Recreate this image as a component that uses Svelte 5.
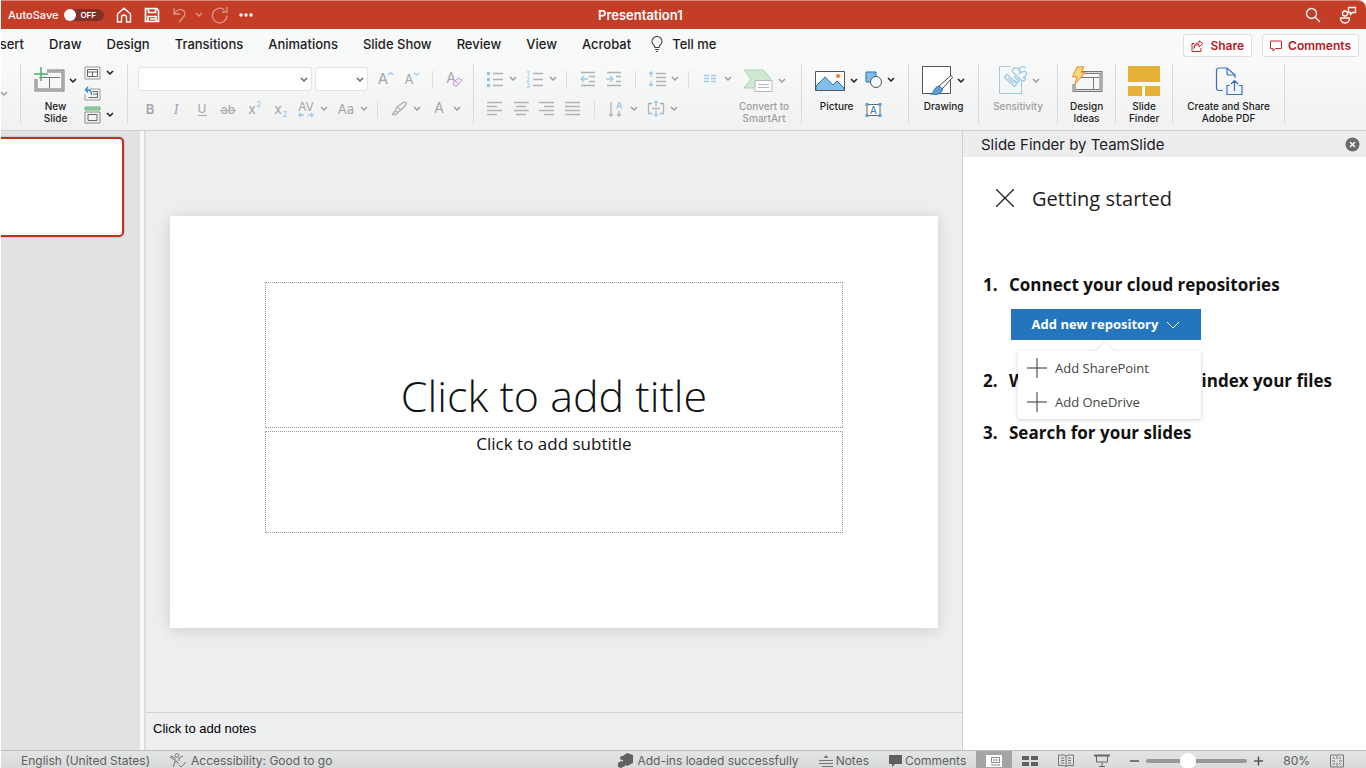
<script lang="ts">
	interface Tool {
		icon?: string;
		label?: string;
		menu?: boolean;
		sep?: boolean;
	}

	const tabs = ['Draw', 'Design', 'Transitions', 'Animations', 'Slide Show', 'Review', 'View', 'Acrobat'];

	const fontSizeTools: Tool[] = [
		{ icon: 'grow', label: 'Increase font size' },
		{ icon: 'shrink', label: 'Decrease font size' },
		{ sep: true },
		{ icon: 'clear', label: 'Clear formatting' }
	];

	const fontStyleTools: Tool[] = [
		{ icon: 'bold', label: 'Bold' },
		{ icon: 'italic', label: 'Italic' },
		{ icon: 'underline', label: 'Underline' },
		{ icon: 'strike', label: 'Strikethrough' },
		{ icon: 'superscript', label: 'Superscript' },
		{ icon: 'subscript', label: 'Subscript' },
		{ icon: 'spacing', label: 'Character spacing', menu: true },
		{ icon: 'textcase', label: 'Change case', menu: true },
		{ sep: true },
		{ icon: 'pen', label: 'Highlight color', menu: true },
		{ icon: 'fontcolor', label: 'Font color', menu: true }
	];

	const listTools: Tool[] = [
		{ icon: 'bullets', label: 'Bullets', menu: true },
		{ icon: 'numbers', label: 'Numbering', menu: true },
		{ sep: true },
		{ icon: 'outdent', label: 'Decrease indent' },
		{ icon: 'indent', label: 'Increase indent' },
		{ sep: true },
		{ icon: 'lines', label: 'Line spacing', menu: true },
		{ sep: true },
		{ icon: 'columns', label: 'Columns', menu: true }
	];

	const alignTools: Tool[] = [
		{ icon: 'left', label: 'Align left' },
		{ icon: 'center', label: 'Center' },
		{ icon: 'right', label: 'Align right' },
		{ icon: 'justify', label: 'Justify' },
		{ sep: true },
		{ icon: 'direction', label: 'Text direction', menu: true },
		{ icon: 'aligntext', label: 'Align text', menu: true }
	];

	const grey = 'stroke="#b1b3b5" stroke-width="1.3"';
	const blue = 'stroke="#9ccbeb" stroke-width="1.3"';
	const text = 'font-family="Inter, sans-serif" fill="#a3a5a7" text-anchor="middle"';

	// 18 x 18 toolbar glyphs
	const icons: Record<string, string> = {
		grow: `<text x="7" y="14" font-size="15" ${text}>A</text><path d="M12 5l2.5-2.500L17 5" ${blue}/>`,
		shrink: `<text x="7" y="14" font-size="13" ${text}>A</text><path d="M12 3l2.500 2L17 3" ${blue}/>`,
		clear: `<text x="6" y="13" font-size="14" ${text}>A</text><path d="M8 13l5-5 4 2-5 6-3-.5zM10 11l4 3" fill="#f6e9f7" stroke="#cc9bd4"/>`,
		bold: `<text x="9" y="14" font-size="13" font-weight="600" ${text}>B</text>`,
		italic: `<text x="9" y="14" font-size="14" font-style="italic" ${text} style="font-family:'Liberation Serif'">I</text>`,
		underline: `<text x="9" y="13" font-size="12" ${text}>U</text><path d="M5 15.500h9" ${grey}/>`,
		strike: `<text x="9" y="14" font-size="12" ${text}>ab</text><path d="M1 10.500h16" ${grey}/>`,
		superscript: `<text x="7" y="14" font-size="14" ${text}>x</text><text x="14" y="7" font-size="7" ${text} style="fill:#7dbbe6">2</text>`,
		subscript: `<text x="7" y="14" font-size="14" ${text}>x</text><text x="14" y="17" font-size="7" ${text} style="fill:#7dbbe6">2</text>`,
		spacing: `<text x="9" y="11" font-size="12" ${text}>AV</text><path d="M2 15h5M11 15h5M4 13l-2 2 2 2M14 13l2 2-2 2" ${blue}/>`,
		textcase: `<text x="9" y="14" font-size="13" ${text}>Aa</text>`,
		pen: `<path d="M5 11l2-4 7-5 2.500 1-2 3.500-6 5.500zM7 7l4 3M2.500 14.500L5 11l3 1-2 2.500z" ${grey}/>`,
		fontcolor: `<text x="9" y="13" font-size="14" ${text}>A</text>`,
		bullets: `<path d="M7 3.500h10M7 9.500h10M7 15.500h10" ${grey}/><path d="M1 3.500h3M1 9.500h3M1 15.500h3" stroke="#8fc4e9" stroke-width="3"/>`,
		numbers: `<path d="M7 3.500h10M7 9.500h10M7 15.500h10" ${grey}/><g font-size="6"><text x="2" y="6" ${text} style="fill:#7dbbe6">1</text><text x="2" y="12" ${text} style="fill:#7dbbe6">2</text><text x="2" y="18" ${text} style="fill:#7dbbe6">3</text></g>`,
		outdent: `<path d="M2 2.500h14M10 6.500h6M10 11.500h6M2 15.500h14" ${grey}/><path d="M9 9H2M5 6L2 9l3 3" ${blue}/>`,
		indent: `<path d="M2 2.500h14M11 6.500h5M11 11.500h5M2 15.500h14" ${grey}/><path d="M1 9h7M5 6l3 3-3 3" ${blue}/>`,
		lines: `<path d="M8 3.500h10M8 7.500h10M8 11.500h10M8 15.500h10" ${grey}/><path d="M3 2v5M3 11v5M1 4l2-2 2 2M1 14l2 2 2-2" ${blue}/>`,
		columns: `<path d="M3 5.500h5M3 8.500h5M3 11.500h5M10 5.500h5M10 8.500h5M10 11.500h5" ${blue}/>`,
		left: `<path d="M1 2.500h15M1 6.500h10M1 10.500h15M1 14.500h10" ${grey}/>`,
		center: `<path d="M2 2.500h15M4 6.500h10M2 10.500h15M4 14.500h10" ${grey}/>`,
		right: `<path d="M1 2.500h15M6 6.500h10M1 10.500h15M6 14.500h10" ${grey}/>`,
		justify: `<path d="M1 2.500h15M1 6.500h15M1 10.500h15M1 14.500h15" ${grey}/>`,
		direction: `<path d="M4 2v14M2 14l2 2 2-2M12 11v5M10 14l2 2 2-2" ${grey}/><text x="12" y="9" font-size="9" ${text} style="fill:#7dbbe6">A</text>`,
		aligntext: `<path d="M5 3.500H1.500v10H5M13 3.500h3.500v10H13M5 8.500h8" ${grey}/><path d="M9 1v6M9 10v6M7 3l2-2 2 2M7 14l2 2 2-2" ${blue}/>`
	};

	const menuItems = ['Add SharePoint', 'Add OneDrive'];

	let autoSave = $state(false);
	let zoom = $state(40);
	let menuOpen = $state(true);
</script>

{#snippet chevron()}
	<svg class="chevron" width="10" height="8" viewBox="0 0 10 8" fill="none" stroke="currentColor" stroke-width="1.5">
		<path d="M2 2l3 3 3-3" />
	</svg>
{/snippet}

{#snippet tools(items: Tool[])}
	{#each items as tool}
		{#if tool.sep}
			<span class="sep"></span>
		{:else}
			<button class="tool" class:plain={!tool.menu} aria-label={tool.label}>
				<svg width="18" height="18" viewBox="0 0 18 18" fill="none">{@html icons[tool.icon ?? '']}</svg>
				{#if tool.menu}{@render chevron()}{/if}
			</button>
		{/if}
	{/each}
{/snippet}

<div class="app">
	<!-- Title bar -->
	<header class="titlebar">
		<div class="title-side">
			<label class="autosave">
				<span>AutoSave</span>
				<input type="checkbox" bind:checked={autoSave} />
				<span class="switch"><i></i>{autoSave ? 'ON' : 'OFF'}</span>
			</label>
			<button aria-label="Home">
				<svg width="16" height="16" viewBox="0 0 16 16" fill="none" stroke="#fff" stroke-width="1.4">
					<path d="M1.500 7L8 1.200 14.500 7v8h-4v-4.500a2.500 2.500 0 00-5 0V15h-4z" />
				</svg>
			</button>
			<button aria-label="Save">
				<svg width="16" height="16" viewBox="0 0 16 16" fill="none" stroke="#fff" stroke-width="1.7">
					<path d="M1.500 1.500h11l2 2v11h-13zM4.500 1.500v4h7v-4M4 14.500v-5h8v5M6 12h5" />
				</svg>
			</button>
			<button class="faded" aria-label="Undo">
				<svg width="16" height="18" viewBox="0 0 16 18" fill="none" stroke="#fff" stroke-width="1.3">
					<path d="M2 2v6h6M2 8c3-5 7-6 10-3 2 3 1 5-5 11" />
				</svg>
				{@render chevron()}
			</button>
			<button class="faded redo" aria-label="Redo">
				<svg width="18" height="18" viewBox="0 0 18 18" fill="none" stroke="#fff" stroke-width="1.3">
					<path d="M16 9.500A7.300 7.300 0 1113.500 4M16 1v5h-5" />
				</svg>
			</button>
			<button aria-label="More">
				<svg width="16" height="6" viewBox="0 0 16 6" fill="#fff">
					<circle cx="3" cy="3" r="1.700" /><circle cx="8" cy="3" r="1.700" /><circle cx="13" cy="3" r="1.700" />
				</svg>
			</button>
		</div>
		<h1>Presentation1</h1>
		<div class="title-side end">
			<button aria-label="Search">
				<svg width="16" height="16" viewBox="0 0 16 16" fill="none" stroke="#fff" stroke-width="1.3">
					<circle cx="6.500" cy="6.500" r="5" /><path d="M10 10l5 5" />
				</svg>
			</button>
			<button aria-label="Account">
				<svg width="18" height="18" viewBox="0 0 18 18" fill="none" stroke="#fff" stroke-width="1.3">
					<circle cx="6" cy="7.500" r="2.500" />
					<path d="M1.500 12h9c0 3-1.500 5-4.500 5s-4.500-2-4.500-5zM9.500 1.500h7v5h-3l-2 2v-2h-2z" />
				</svg>
			</button>
		</div>
	</header>

	<!-- Tabs -->
	<nav class="tabs">
		<a class="cut" href="#insert">Insert</a>
		{#each tabs as tab}
			<a href="#{tab}">{tab}</a>
		{/each}
		<a class="tell" href="#tell">
			<svg width="12" height="16" viewBox="0 0 12 16" fill="none" stroke="#444" stroke-width="1.1">
				<path d="M4 11.500C4 9 1 8.500 1 5.500a5 5 0 0110 0c0 3-3 3.500-3 6zM4 13.500h4M5 15.500h2" />
			</svg>
			Tell me
		</a>
		<div class="tab-actions">
			<button>
				<svg width="13" height="12" viewBox="0 0 13 12" fill="none" stroke="#c1272d">
					<path d="M3.500 3.500h-2.500v8h9V8M3 8.500c.5-3 2-4 5-4V7l4-3.500L8 .8v2c-3 0-5 2-5 5.700z" />
				</svg>
				Share
			</button>
			<button>
				<svg width="12" height="12" viewBox="0 0 12 12" fill="none" stroke="#c1272d">
					<path d="M.5 1h11v7.500H5.500L3 11V8.500H.5z" />
				</svg>
				Comments
			</button>
		</div>
	</nav>

	<!-- Ribbon -->
	<div class="ribbon">
		<div class="group edge disabled">{@render chevron()}</div>

		<div class="group">
			<button class="big">
				<span class="art">
					<svg width="32" height="30" viewBox="0 0 32 30" fill="none">
						<path d="M14 5h16v19H3V13" stroke="#777" stroke-width="3" />
						<path d="M14 5h16v19H3V13" stroke="#ddd" />
						<path d="M6 11.500h21M16.500 11.500V22" stroke="#777" />
						<path d="M8 1v14M1 8h14" stroke="#4caf6a" stroke-width="1.500" />
					</svg>
					{@render chevron()}
				</span>
				<span>New<br />Slide</span>
			</button>
			<div class="stack">
				<button class="tool" aria-label="Layout">
					<svg width="17" height="16" viewBox="0 0 17 16" fill="none" stroke="#666">
						<path d="M1 2h15v12H1z" stroke="#999" /><path d="M3.500 4.500h10v7h-10zM3.500 7h10M8.500 7v4.500" />
					</svg>
					{@render chevron()}
				</button>
				<button class="tool" aria-label="Reset">
					<svg width="17" height="16" viewBox="0 0 17 16" fill="none" stroke="#666">
						<path d="M6 3h10v11H1V8" stroke="#999" /><path d="M8.500 5.500h5v6h-9M9 8h4.500" />
						<path d="M4 1L1.500 4 4 6.500M1.500 4h3c2 0 3 2 3 5" stroke="#2b88d8" stroke-width="1.300" />
					</svg>
				</button>
				<button class="tool" aria-label="Section">
					<svg width="17" height="18" viewBox="0 0 17 18" fill="none" stroke="#666">
						<path d="M1 1h15v3H1z" fill="#8fd0a0" stroke="#6bb97f" /><path d="M1 6h15v11H1z" stroke="#888" /><path d="M4 8.500h9v6H4z" />
					</svg>
					{@render chevron()}
				</button>
			</div>
		</div>

		<div class="group font disabled">
			<div class="rows">
				<div class="row">
					<label class="combo wide">
						<select aria-label="Font"><option></option></select>
						{@render chevron()}
					</label>
					<label class="combo">
						<select aria-label="Font size"><option></option></select>
						{@render chevron()}
					</label>
					{@render tools(fontSizeTools)}
				</div>
				<div class="row indent">{@render tools(fontStyleTools)}</div>
			</div>
		</div>

		<div class="group disabled">
			<div class="rows">
				<div class="row">{@render tools(listTools)}</div>
				<div class="row">{@render tools(alignTools)}</div>
			</div>
			<button class="big">
				<span class="art">
					<svg width="32" height="30" viewBox="0 0 32 30" fill="none">
						<path d="M2 4h19l8 9-8 9H2l7-9z" fill="#cfe8d4" stroke="#a9d3b2" />
						<path d="M13 14.500h17v11H13z" fill="#fff" stroke="#b5b7b9" /><path d="M16 18.500h11M16 21.500h11" stroke="#b5b7b9" />
					</svg>
					{@render chevron()}
				</span>
				<span>Convert to<br />SmartArt</span>
			</button>
		</div>

		<div class="group">
			<button class="big">
				<span class="art">
					<svg width="32" height="30" viewBox="0 0 32 30">
						<path d="M1.500 5.500h29v19h-29z" fill="#fff" />
						<path d="M2 20l9-9 8 8 4-4 7 7v2.500H2z" fill="#83bdea" stroke="#2474b5" />
						<path d="M1.500 5.500h29v19h-29z" fill="none" stroke="#555" />
						<circle cx="24" cy="10" r="2" fill="#ed7d31" />
					</svg>
					{@render chevron()}
				</span>
				<span>Picture</span>
			</button>
			<div class="stack pair">
				<button class="tool" aria-label="Shapes">
					<svg width="17" height="18" viewBox="0 0 17 18">
						<path d="M1 1h10v10H1z" fill="#83bdea" stroke="#2474b5" />
						<circle cx="11" cy="11" r="5.500" fill="#f7f8f8" stroke="#555" />
					</svg>
					{@render chevron()}
				</button>
				<button class="tool" aria-label="Text box">
					<svg width="17" height="16" viewBox="0 0 17 16">
						<path d="M2 2.500h13v11H2z" fill="#fff" stroke="#666" />
						<path d="M.5 1h3v3h-3zM13.500 1h3v3h-3zM.5 12h3v3h-3zM13.500 12h3v3h-3z" fill="#5f9fd6" />
						<text x="8.500" y="12" font-size="10" font-family="Inter" text-anchor="middle" fill="#2474b5">A</text>
					</svg>
				</button>
			</div>
		</div>

		<div class="group">
			<button class="big">
				<span class="art">
					<svg width="32" height="32" viewBox="0 0 32 32">
						<path d="M1.500 1.500h28v27h-28z" fill="#fff" stroke="#555" />
						<path d="M30 10.500l1.500 2L21 24l-3-3z" fill="#fff" stroke="#444" />
						<path d="M18 21l3.500 3c-1 6-8 6-12 5 4-1 3-7 8.500-8z" fill="#5f9fd6" stroke="#2474b5" />
					</svg>
					{@render chevron()}
				</span>
				<span>Drawing</span>
			</button>
		</div>

		<div class="group roomy disabled">
			<button class="big">
				<span class="art">
					<svg width="32" height="32" viewBox="0 0 32 32" fill="none" stroke="#9fcbe8">
						<path d="M15 1.500H3.500v27h22V17" />
						<path d="M8.500 12.500l2.500-3 10 9-2.500 3zM12 13l6 5.500" stroke-width="1.300" />
						<path d="M16 6c1-4 5-4 7-1 1-4 5-4 7-2M22 9c3-2 6-4 8-2s-1 4-3 6M16 6l10 10c3 0 4-2 3-4M18 11l5 5c-1 2-4 1-5-1M23 5l3 3" stroke-width="1.400" />
					</svg>
					{@render chevron()}
				</span>
				<span>Sensitivity</span>
			</button>
		</div>

		<div class="group">
			<button class="big">
				<span class="art">
					<svg width="32" height="30" viewBox="0 0 32 30" fill="none">
						<path d="M11 6.500h19v18H3V18" stroke="#777" stroke-width="3" />
						<path d="M11 6.500h19v18H3V18" stroke="#ddd" />
						<path d="M10 11.500h18M22.500 11.500V23" stroke="#777" />
						<path d="M6 .8h7l-3 6h4L4 18l2-7H1.500z" fill="#ffd579" stroke="#ee8432" />
					</svg>
				</span>
				<span>Design<br />Ideas</span>
			</button>
		</div>

		<div class="group">
			<button class="big">
				<span class="art">
					<svg width="32" height="32" viewBox="0 0 32 32" fill="#e6b137">
						<path d="M0 1h32v16H0zM0 21h14v10H0zM17 21h15v10H17z" />
					</svg>
				</span>
				<span>Slide<br />Finder</span>
			</button>
		</div>

		<div class="group roomy">
			<button class="big">
				<span class="art">
					<svg width="28" height="30" viewBox="0 0 28 30" fill="none" stroke="#3a6fc9" stroke-width="1.200">
						<path d="M8 24.500H3.500a2 2 0 01-2-2V4a2 2 0 012-2H12l8 7v3M12 2v5a2 2 0 002 2h6" />
						<path d="M15 19.500h-3v9h15v-9h-3M19.500 25V14.500M16 18l3.500-3.500L23 18" />
					</svg>
				</span>
				<span>Create and Share<br />Adobe PDF</span>
			</button>
		</div>
	</div>

	<!-- Workspace -->
	<main class="workspace">
		<aside class="thumbs"><div class="thumb"></div></aside>

		<section class="editor">
			<div class="canvas">
				<div class="slide">
					<div class="placeholder title">Click to add title</div>
					<div class="placeholder">Click to add subtitle</div>
				</div>
			</div>
			<div class="notes">Click to add notes</div>
		</section>

		<aside class="panel">
			<div class="panel-bar">
				<span>Slide Finder by TeamSlide</span>
				<button aria-label="Close pane">
					<svg width="15" height="15" viewBox="0 0 15 15">
						<circle cx="7.500" cy="7.500" r="7" fill="#6b6b6b" />
						<path d="M5 5l5 5M10 5l-5 5" stroke="#fff" stroke-width="1.400" />
					</svg>
				</button>
			</div>
			<div class="panel-title">
				<button aria-label="Close">
					<svg width="18" height="18" viewBox="0 0 18 18" stroke="#222" stroke-width="1.300">
						<path d="M0 0l18 18M18 0L0 18" />
					</svg>
				</button>
				<h2>Getting started</h2>
			</div>
			<ol class="steps">
				<li>
					<span class="num">1.</span>
					<div>
						<h3>Connect your cloud repositories</h3>
						<div class="dropdown">
							<button class="add" aria-expanded={menuOpen} onclick={() => (menuOpen = !menuOpen)}>
								Add new repository
								<svg width="14" height="8" viewBox="0 0 14 8" fill="none" stroke="#fff">
									<path d="M1 1l6 6 6-6" />
								</svg>
							</button>
							{#if menuOpen}
								<div class="menu">
									{#each menuItems as item}
										<button>
											<svg width="20" height="20" viewBox="0 0 20 20" stroke="#333">
												<path d="M10 0v20M0 10h20" />
											</svg>
											{item}
										</button>
									{/each}
								</div>
							{/if}
						</div>
					</div>
				</li>
				<li>
					<span class="num">2.</span>
					<h3>Wait for the service to index your files</h3>
				</li>
				<li>
					<span class="num">3.</span>
					<h3>Search for your slides</h3>
				</li>
			</ol>
		</aside>
	</main>

	<!-- Status bar -->
	<footer class="status">
		<button>English (United States)</button>
		<button>
			<svg width="18" height="16" viewBox="0 0 18 16" fill="none" stroke="#777">
				<circle cx="7" cy="2.500" r="1.800" />
				<path d="M1 3l4 2v4l-2 5M13 3L9 5v3M5 9l2-1 1 3M1 3l-.5 1.500L4 6.500M9 12l2 2 5-5" />
			</svg>
			Accessibility: Good to go
		</button>
		<button class="push">
			<svg width="16" height="15" viewBox="0 0 16 15" fill="#606060">
				<path d="M9 0l6 2v8l-6 3-4-2V3z" /><path d="M0 10l3-2 4 1v4l-4 2-3-1z" /><circle cx="4" cy="5" r="2" />
			</svg>
			Add-ins loaded successfully
		</button>
		<button>
			<svg width="14" height="12" viewBox="0 0 14 12" stroke="#777">
				<path d="M0 5.500h14M0 8.500h14M3 11.500h11" /><path d="M7 0l2.500 3h-5z" fill="#777" stroke="none" />
			</svg>
			Notes
		</button>
		<button>
			<svg width="13" height="12" viewBox="0 0 13 12" fill="#606060"><path d="M0 0h13v9H6l-3 3V9H0z" /></svg>
			Comments
		</button>
		<div class="views">
			<button class="active" aria-label="Normal view">
				<svg width="16" height="14" viewBox="0 0 16 14" fill="none" stroke="#888">
					<path d="M0 1h16v12H0z" fill="#fff" stroke="none" /><path d="M5.500 3.500h8v5h-8zM5 11h9M7 6h5" />
				</svg>
			</button>
			<button aria-label="Slide sorter">
				<svg width="16" height="12" viewBox="0 0 16 12" fill="#606060"><path d="M0 1h7v4H0zM9 1h7v4H9zM0 7h7v4H0zM9 7h7v4H9z" /></svg>
			</button>
			<button aria-label="Reading view">
				<svg width="16" height="13" viewBox="0 0 16 13" fill="none" stroke="#777">
					<path d="M8 2v10.500M.5 1H6l2 1 2-1h5.500v10.500H10l-2 1-2-1H.5zM3 4h3M3 6.500h3M3 9h3M10 4h3M10 6.500h3M10 9h3" />
				</svg>
			</button>
			<button aria-label="Slide show">
				<svg width="16" height="13" viewBox="0 0 16 13" fill="none" stroke="#666">
					<path d="M0 1.500h16" stroke-width="2" /><path d="M2.500 2v6h11V2M8 8v4M5 12.500h6" />
				</svg>
			</button>
		</div>
		<div class="zoom">
			<button aria-label="Zoom out"><svg width="9" height="10" viewBox="0 0 9 10"><path d="M0 5h9" stroke="#555" stroke-width="1.500" /></svg></button>
			<input type="range" aria-label="Zoom" min="0" max="100" bind:value={zoom} />
			<button aria-label="Zoom in"><svg width="9" height="10" viewBox="0 0 9 10"><path d="M0 5h9M4.500 .5v9" stroke="#555" stroke-width="1.500" /></svg></button>
		</div>
		<button>{zoom * 2}%</button>
		<button aria-label="Fit to window">
			<svg width="14" height="14" viewBox="0 0 14 14" fill="none" stroke="#777">
				<path d="M.5 1h13v12H.5zM7 2v3M7 9v3M2 7h3M9 7h3M3 3l2 2M11 3L9 5M3 11l2-2M11 11L9 9" />
			</svg>
		</button>
	</footer>
</div>

<style>
	:global(body) {
		margin: 0;
	}

	.app {
		box-sizing: border-box;
		height: 100vh;
		display: flex;
		flex-direction: column;
		overflow: hidden;
		border-left: 1px solid #fff;
		font-family: Inter, sans-serif;
		font-size: 12px;
		color: #1c1c1c;
	}

	button {
		display: flex;
		align-items: center;
		padding: 0;
		border: 0;
		background: none;
		font: inherit;
		color: inherit;
	}

	svg {
		flex-shrink: 0;
	}

	h1,
	h2,
	h3 {
		margin: 0;
	}

	/* Title bar */
	.titlebar {
		box-sizing: border-box;
		height: 29px;
		flex-shrink: 0;
		display: flex;
		align-items: center;
		border-top: 1px solid #d98a7c;
		border-top-right-radius: 8px;
		background: #c43e27;
		color: #fff;
	}

	.titlebar h1 {
		font-size: 13px;
		font-weight: 600;
	}

	.title-side {
		box-sizing: border-box;
		flex: 7 1 0;
		display: flex;
		align-items: center;
		gap: 12px;
		padding-left: 7px;
	}

	.title-side.end {
		flex-grow: 8;
		justify-content: flex-end;
		gap: 18px;
		padding: 0 9px 0 0;
	}

	.autosave {
		display: flex;
		align-items: center;
		gap: 6px;
		font-size: 11px;
		font-weight: 500;
	}

	.autosave input {
		position: absolute;
		opacity: 0;
	}

	.switch {
		display: flex;
		align-items: center;
		gap: 4px;
		width: 40px;
		height: 12px;
		border-radius: 6px;
		background: #7e3226;
		font-size: 8px;
		font-weight: 600;
	}

	.switch i {
		width: 12px;
		height: 12px;
		border-radius: 50%;
		background: #fff;
	}

	.faded {
		gap: 6px;
		opacity: 0.45;
	}

	.redo {
		margin: 0 -3px 0 -5px;
	}

	/* Tabs */
	.tabs {
		height: 33px;
		flex-shrink: 0;
		display: flex;
		align-items: center;
		gap: 25px;
		background: #f8f9f9;
		font-size: 13px;
		font-weight: 500;
	}

	.tabs a {
		padding-bottom: 3px;
		color: inherit;
		text-decoration: none;
		white-space: nowrap;
	}

	/* scrolled so that only the end of the label shows */
	.tabs .cut {
		width: 23px;
		display: flex;
		justify-content: flex-end;
		overflow: hidden;
	}

	.tabs .tell {
		display: flex;
		align-items: center;
		gap: 9px;
		margin-left: -5px;
	}

	.tab-actions {
		display: flex;
		gap: 10px;
		margin: 0 7px 0 auto;
	}

	.tab-actions button {
		gap: 6px;
		height: 23px;
		padding: 0 7px;
		border: 1px solid #dfdfdf;
		border-radius: 3px;
		background: #fff;
		color: #b3191f;
		font-size: 12px;
		font-weight: 600;
	}

	/* Ribbon */
	.ribbon {
		box-sizing: border-box;
		height: 69px;
		flex-shrink: 0;
		display: flex;
		padding: 2px 0 6px;
		border-bottom: 1px solid #cfd0d1;
		background: linear-gradient(#f8f9f9, #f1f1f2);
	}

	.group {
		display: flex;
		gap: 6px;
		padding: 0 12px;
		border-right: 1px solid #d9dadb;
	}

	.group.edge {
		align-items: center;
		padding: 0 11px 0 0;
		margin-left: -2px;
	}

	.group.font {
		padding: 0 10px;
	}

	.group.roomy {
		padding: 0 14px;
	}

	.disabled {
		color: #9b9d9f;
	}

	.big {
		flex-direction: column;
		justify-content: flex-start;
		color: inherit;
		font-size: 10px;
		font-weight: 500;
		line-height: 12px;
		text-align: center;
		white-space: nowrap;
	}

	.art {
		display: flex;
		align-items: center;
		gap: 3px;
		height: 34px;
		margin-bottom: 2px;
	}

	.stack {
		display: flex;
		flex-direction: column;
		justify-content: space-between;
		padding-top: 1px;
	}

	.stack.pair {
		justify-content: space-around;
		padding: 0;
	}

	.row {
		display: flex;
		align-items: center;
		gap: 8px;
		height: 30px;
	}

	.row.indent {
		padding-left: 3px;
	}

	.tool {
		gap: 4px;
	}

	.sep {
		width: 1px;
		height: 17px;
		margin-right: 4px;
		background: #dcddde;
	}

	.plain + .sep {
		margin-left: 4px;
	}

	.combo {
		position: relative;
		display: flex;
		width: 53px;
	}

	.combo.wide {
		width: 174px;
		margin-right: -5px;
	}

	.combo select {
		width: 100%;
		height: 24px;
		appearance: none;
		border: 1px solid #e3e4e5;
		border-radius: 3px;
		background: #fff;
	}

	.combo .chevron {
		position: absolute;
		right: 3px;
		top: 9px;
		color: #666;
	}

	/* Workspace */
	.workspace {
		flex: 1;
		min-height: 0;
		display: flex;
	}

	.thumbs {
		width: 139px;
		flex-shrink: 0;
		padding-top: 6px;
		background: #e1e2e4;
		border-right: 4px solid #f8f8f9;
	}

	.thumb {
		width: 121px;
		height: 96px;
		border: 2px solid #c0311c;
		border-left: 0;
		border-radius: 0 5px 5px 0;
		background: #fff;
		box-shadow: 0 0 1px 1px #c9cacc;
	}

	.editor {
		flex: 1;
		min-width: 0;
		display: flex;
		flex-direction: column;
		border-left: 2px solid #dcdddf;
		background: #edeef0;
	}

	.canvas {
		flex: 1;
		display: flex;
		align-items: center;
		justify-content: center;
		padding: 0 24px;
	}

	.slide {
		box-sizing: border-box;
		width: 100%;
		aspect-ratio: 768 / 412;
		display: grid;
		grid-template-rows: 146fr 102fr;
		gap: 3px;
		padding: 66px 95px 95px;
		background: #fff;
		box-shadow: 0 2px 14px rgba(0, 0, 0, 0.14);
		font-family: 'Open Sans', sans-serif;
	}

	.placeholder {
		border: 1px dotted #999;
		font-size: 17px;
		line-height: 24px;
		text-align: center;
		color: #111;
	}

	.placeholder.title {
		display: flex;
		align-items: flex-end;
		justify-content: center;
		font-size: 43px;
		font-weight: 300;
		line-height: 62px;
	}

	.notes {
		height: 38px;
		box-sizing: border-box;
		padding: 7px 7px 0;
		border-top: 1px solid #d3d4d5;
		font-family: 'Liberation Sans', Arial, sans-serif;
		font-size: 13px;
		line-height: 18px;
		color: #000;
	}

	/* Side panel */
	.panel {
		width: 403px;
		flex-shrink: 0;
		border-left: 1px solid #cfd0d1;
		background: #fff;
		font-family: 'Open Sans', sans-serif;
	}

	.panel-bar {
		display: flex;
		align-items: center;
		justify-content: space-between;
		height: 26px;
		padding: 0 6px 0 18px;
		background: #ecedef;
		font-family: Inter, sans-serif;
		font-size: 15px;
	}

	.panel-title {
		display: flex;
		align-items: center;
		gap: 18px;
		height: 82px;
		padding-left: 33px;
	}

	.panel-title h2 {
		font-size: 20px;
		font-weight: 500;
	}

	.steps {
		display: flex;
		flex-direction: column;
		gap: 29px;
		margin: 0;
		padding: 34px 20px 0;
		list-style: none;
		font-size: 17px;
		line-height: 23px;
		font-weight: 700;
		color: #111;
	}

	.steps li {
		display: flex;
	}

	.num {
		width: 26px;
	}

	.steps h3 {
		font-size: inherit;
		font-weight: inherit;
		white-space: nowrap;
	}

	.dropdown {
		position: relative;
		width: 190px;
		margin: 13px 0 0 2px;
	}

	.add {
		justify-content: center;
		gap: 8px;
		width: 100%;
		height: 31px;
		background: #2375be;
		color: #fff;
		font-size: 13px;
		font-weight: 700;
	}

	.menu {
		position: absolute;
		top: 42px;
		left: 7px;
		right: 0;
		z-index: 1;
		background: #fff;
		box-shadow: 0 1px 4px rgba(0, 0, 0, 0.2);
	}

	.menu::before {
		content: '';
		position: absolute;
		top: -6px;
		left: 80px;
		width: 14px;
		height: 14px;
		background: #fff;
		box-shadow: -1px -1px 2px rgba(0, 0, 0, 0.1);
		transform: rotate(45deg);
	}

	.menu button {
		position: relative;
		gap: 8px;
		width: 100%;
		height: 34px;
		padding-left: 9px;
		background: #fff;
		font-size: 13px;
		font-weight: 400;
		color: #444;
	}

	/* Status bar */
	.status {
		box-sizing: border-box;
		height: 18px;
		flex-shrink: 0;
		display: flex;
		align-items: center;
		gap: 20px;
		padding: 2px 22px 0 20px;
		border-top: 1px solid #bcbdbd;
		background: linear-gradient(#e3e4e4, #d8d9d9);
		font-size: 12px;
		color: #606060;
		white-space: nowrap;
	}

	.status > button {
		gap: 3px;
	}

	.push {
		margin-left: auto;
	}

	.views {
		display: flex;
		align-self: stretch;
		margin: -2px -10px 0;
	}

	.views button {
		justify-content: center;
		width: 36px;
		padding-top: 2px;
	}

	.views .active {
		background: #a3a4a4;
	}

	.zoom {
		display: flex;
		align-items: center;
		gap: 7px;
	}

	.zoom input {
		width: 101px;
		height: 16px;
		margin: 0;
		appearance: none;
		background: none;
	}

	.zoom input::-webkit-slider-runnable-track {
		height: 4px;
		border-radius: 2px;
		background: #999;
	}

	.zoom input::-webkit-slider-thumb {
		appearance: none;
		width: 16px;
		height: 16px;
		margin-top: -6px;
		border-radius: 50%;
		background: #fff;
	}
</style>
